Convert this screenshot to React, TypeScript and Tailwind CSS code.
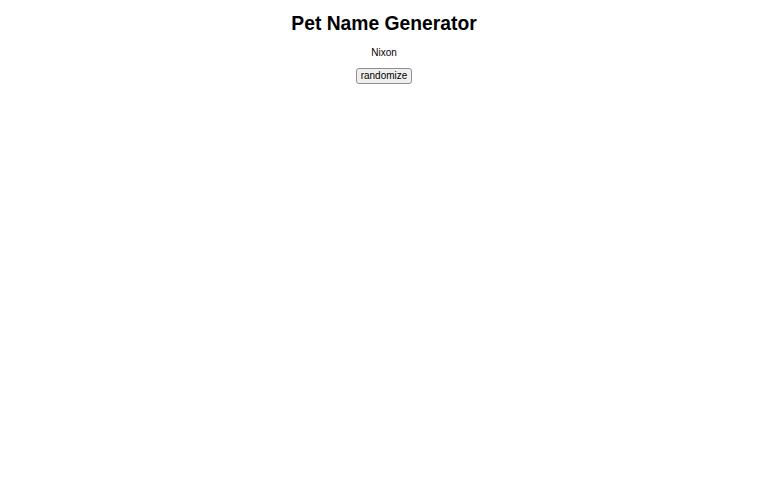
export default function App() {
  return (
    <div className="text-center text-[10px] text-black bg-white min-h-[480px]" style={{ fontFamily: '"Liberation Sans", Arial, sans-serif' }}>
      <h1 className="text-[19.3px] font-bold pt-[12px] leading-[23px]">Pet Name Generator</h1>
      <div className="mt-[12px] leading-[12px]">Nixon</div>
      <div className="mt-[9px]">
        <button className="text-[10px] leading-[12px] px-[4px] py-[1px] border border-[#8f8f8f] bg-[#f0f0f0] rounded-[3px]">randomize</button>
      </div>
    </div>
  );
}
